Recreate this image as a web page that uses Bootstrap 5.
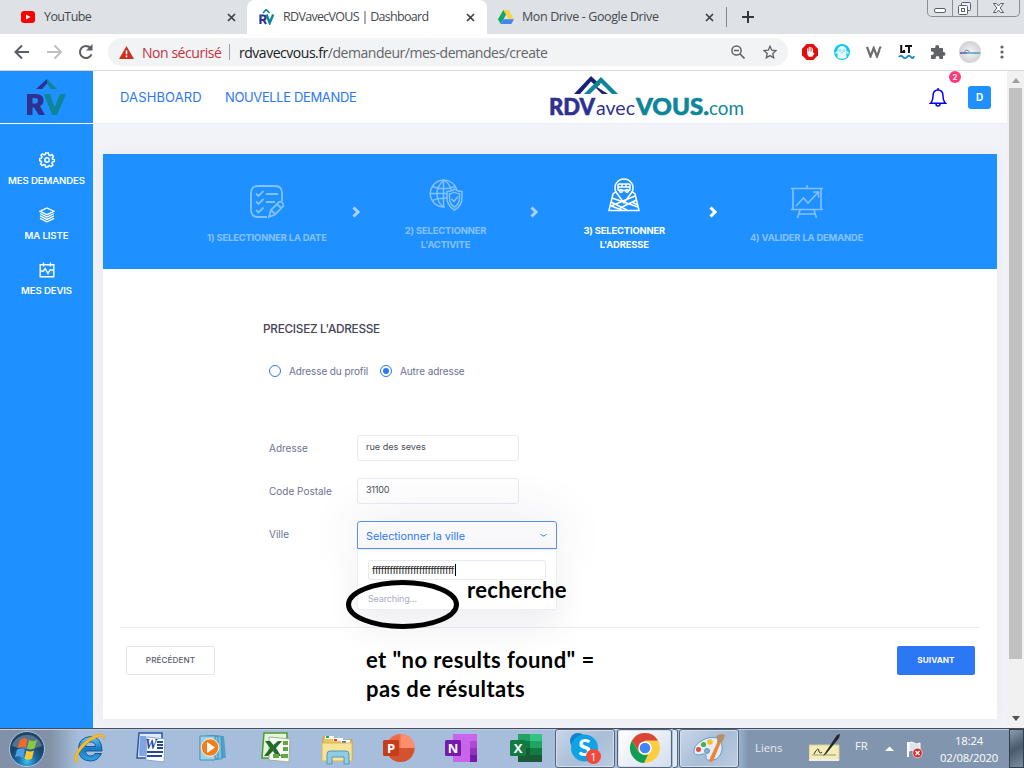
<!DOCTYPE html>
<html lang="fr">
<head>
<meta charset="utf-8">
<title>RDVavecVOUS | Dashboard</title>
<link href="https://cdn.jsdelivr.net/npm/bootstrap@5.3.0/dist/css/bootstrap.min.css" rel="stylesheet">
<style>
:root{--brand:#1e90ff;--accent:#2c77f4;--pop:Inter,"Open Sans",sans-serif;--segoe:"Open Sans","Noto Sans",sans-serif}
body{width:1024px;height:768px;overflow:hidden;font-family:var(--pop);background:#f2f3f8}
svg{display:block;flex:none}
.tabstrip{height:34px;background:#dee1e6;font:12.5px/34px var(--segoe);color:#45494d}
.tab-item{height:34px;position:relative}
.tab-item.current{background:#fff;border-radius:8px 8px 0 0}
.tab-title{letter-spacing:-.66px;white-space:nowrap}
.toolbar{height:37px;background:#fff;border-bottom:1px solid #d8d9dc;font-family:var(--segoe)}
.omnibox{width:680px;height:28px;border-radius:14px;background:#f1f3f4;font-size:14px;white-space:nowrap}
.winbtns{width:93px;height:17px;border:1px solid #8a8f96;border-top:0;border-radius:0 0 5px 5px}
.winbtns>div+div{border-left:1px solid #8a8f96}
.viewport{height:657px}
.side{width:93px;background:var(--brand);color:#fff}
.side-logo{height:53px;border-bottom:1px solid #fff}
.side-link{height:55px;font-size:9.6px;font-weight:600;line-height:14px;white-space:nowrap;letter-spacing:-.1px}
.topbar{height:53px;background:#fff;border-bottom:1px solid #ebedf2}
.topbar .top-link{color:var(--accent);text-decoration:none;font-size:13px;white-space:nowrap;padding-top:1px}
.bell{width:18px;position:relative}
.bell-count{position:absolute;left:20px;top:-16px;width:12px;height:12px;border-radius:6px;background:#fd397a;color:#fff;font-size:8px;line-height:12px;font-weight:600;text-align:center}
.avatar{width:23px;height:23px;border-radius:3px;background:var(--brand);color:#fff;font-size:10px;font-weight:700}
.panel{width:894px;height:565px;margin:30px 0 0 10px;background:#fff;box-shadow:0 0 13px rgba(82,63,105,.05)}
.steps{height:115px;background:var(--brand);display:grid;grid-template-columns:178.7px 178.7px 178.7px 186px;padding-left:75px;color:#fff}
.step{position:relative;font-size:9.4px;font-weight:700;line-height:14px;text-align:center;letter-spacing:-.15px}
.step>.inner{opacity:.45;position:relative;left:-.5px}
.step.on>.inner{opacity:1}
.step .chev{position:absolute;right:-4px;top:52px;opacity:.6}
.step.on .chev{opacity:1}
.form-area{height:358px;padding:52px 0 0 160px;color:#6c7293;font-size:10px}
.form-area h3{font-size:11.8px;line-height:16px;font-weight:500;color:#464457;margin:0;letter-spacing:-.28px}
.dot{width:12px;height:12px;border:1px solid var(--accent);border-radius:6px;display:flex;align-items:center;justify-content:center}
.dot.sel::after{content:"";width:6px;height:6px;border-radius:3px;background:var(--accent)}
.lbl{width:88px;line-height:26px}
.field{width:162px;height:26px;border:1px solid #e8eaf1;border-radius:3px;padding:0 8px;line-height:22px;font-size:9.1px;color:#495057}
.picker{width:200px;height:28px;position:relative;border:1px solid #5a8ff0;border-radius:3px 3px 0 0;padding:0 9px 0 8px;color:var(--accent);font-size:10.8px;background:linear-gradient(#fafafc,#f7f7fa);box-shadow:0 0 50px rgba(82,63,105,.15)}
.drop{position:absolute;left:-1px;top:27px;width:200px;height:61px;background:#fff;border:1px solid #ebedf2;border-radius:0 0 3px 3px;padding:10px 10px;box-shadow:0 18px 30px rgba(82,63,105,.09)}
.drop .q{width:178px;height:20px;border:1px solid #e8eaf1;border-radius:2px;font:10px/18px var(--pop);color:#222;padding-left:3px}
.caret{width:1px;height:12px;background:#000;margin-left:1px}
.drop .wait{font-size:9px;line-height:12px;color:#a7abc3;margin-top:13px;letter-spacing:-.15px}
.actions{margin:0 17px;border-top:1px solid #ebedf2;padding:18px 5px 0 6px}
.btn-step{height:29px;font-size:8.2px;font-weight:500;border-radius:2px;padding:0;letter-spacing:.05px}
.btn-prev{width:89px;border:1px solid #e6e8ef;color:#595d6e}
.btn-next{width:78px;background:var(--accent);color:#fff;font-weight:700}
.scroller{width:17px;background:#f1f1f1}
.thumb{width:13px;height:571px;background:#c1c1c1}
.note{position:absolute;font:700 22px/29px Lato,sans-serif;color:#000;white-space:nowrap}
.note-a{left:467px;top:575px;letter-spacing:.3px}
.note-b{left:366px;top:645px;letter-spacing:.42px}
.ring{position:absolute;left:345px;top:578px}
.taskbar{height:40px;border-top:1px solid #434d5b;background:linear-gradient(90deg,#8291a8 0,#8291a8 50px,#a6bedb 78px,#a6bedb 735px,#8295ae 748px,#8295ae);box-shadow:inset 0 1px #c0cfe1;color:#f4f6fa;font-family:var(--segoe);font-size:11.3px}
.app{width:62px;height:39px;display:flex;align-items:center;justify-content:center;padding-bottom:2px}
.app.open{width:60px;margin-right:2px;border:1px solid #54647b;border-radius:3px;box-shadow:inset 0 0 0 1px #d5dfeb;background:linear-gradient(135deg,#c8d5e7,#a9bdd7 55%,#bccde1);padding-bottom:2px}
.app.front{width:55px;background:linear-gradient(135deg,#fff,#d3dfef);margin-right:1px}
.stack-edge{width:5px;height:39px;margin-right:1px;border:1px solid #54647b;border-left:0;border-radius:0 3px 3px 0;background:#dfe8f3}
.peek{width:15px;height:39px;border:1px solid #333e4c;background:linear-gradient(150deg,#8b9bb0,#4a5a6e 50%,#7d8fa5)}
</style>
</head>
<body class="d-flex flex-column m-0 position-relative">
<svg width="0" height="0" class="position-absolute"><defs>
<g id="cross"><path d="M1 1l7 7M8 1L1 8" stroke="#3c4043" stroke-width="1.7"/></g>
<g id="arrow"><path d="M1.500 1.500L6 6L1.500 10.500" fill="none" stroke="#fff" stroke-width="3.100"/></g>
</defs></svg>

<nav class="tabstrip d-flex">
  <div class="tab-item d-flex align-items-center" style="width:247px">
    <svg style="margin-left:21px" width="14" height="12" viewBox="0 0 14 12"><rect width="14" height="12" rx="3" fill="#f00"/><path d="M5 3.400v5.200L9.500 6z" fill="#fff"/></svg>
    <span class="tab-title" style="margin-left:9px;letter-spacing:-.6px">YouTube</span>
    <svg class="ms-auto" style="margin-right:11px" width="9" height="9"><use href="#cross"/></svg>
  </div>
  <div class="tab-item current d-flex align-items-center" style="width:240px">
    <svg style="margin-left:12px" width="16" height="16" viewBox="0 0 16 16"><path d="M4 4l3.200-3.400L10.500 4" fill="none" stroke="#0e8699" stroke-width="1.600"/><path d="M1.500 15V6.500h3q2 0 2 2.200T4 11H2m2.500 0l2.500 4" fill="none" stroke="#2e3192" stroke-width="2.200"/><path d="M7.500 5.500l3.200 8.500l3.500-8.500" fill="none" stroke="#0e8699" stroke-width="2.400"/></svg>
    <span class="tab-title" style="margin-left:8px;letter-spacing:-.7px">RDVavecVOUS | Dashboard</span>
    <svg class="ms-auto" style="margin-right:12px" width="9" height="9"><use href="#cross"/></svg>
  </div>
  <div class="tab-item d-flex align-items-center" style="width:239px">
    <svg style="margin-left:11px" width="16" height="14" viewBox="0 0 16 14"><path d="M5.300 0h5.400L16 9.300h-5.400z" fill="#ffcf48"/><path d="M5.300 0L0 9.300L2.700 14L8 4.700z" fill="#11a861"/><path d="M5.400 9.300H16L13.300 14H2.700z" fill="#4285f4"/></svg>
    <span class="tab-title" style="margin-left:8px;letter-spacing:-.38px">Mon Drive - Google Drive</span>
    <svg class="ms-auto" style="margin-right:12px" width="9" height="9"><use href="#cross"/></svg>
  </div>
  <div style="width:1px;height:20px;margin-top:7px;background:#84888e"></div>
  <svg style="margin:11px 0 0 15px" width="12" height="12"><path d="M6 0v12M0 6h12" stroke="#33373b" stroke-width="2"/></svg>
  <div class="winbtns d-flex ms-auto" style="margin-right:4px">
    <div style="width:25px"><svg width="24" height="16"><rect x="6.500" y="8.500" width="11" height="4" rx="1.500" fill="#fff" stroke="#5b5f66"/></svg></div>
    <div style="width:25px"><svg width="24" height="16"><rect x="8.500" y="2.500" width="9" height="8" rx="1" fill="#eef" stroke="#5b5f66"/><rect x="5.500" y="5.500" width="9" height="9" rx="1" fill="#fff" stroke="#5b5f66"/><rect x="8.500" y="8.500" width="3" height="3" fill="none" stroke="#5b5f66"/></svg></div>
    <div style="width:42px"><svg width="41" height="16"><path d="M15.500 3.500h3l2 2.500l2-2.500h3l-3.300 4.500l3.300 4.500h-3l-2-2.500l-2 2.500h-3l3.300-4.500z" fill="#fff" stroke="#5b5f66"/></svg></div>
  </div>
</nav>

<div class="toolbar d-flex align-items-center">
  <svg style="margin-left:14px" width="16" height="16"><path d="M15 8H2M8 1.500L1.500 8L8 14.500" fill="none" stroke="#5a5e63" stroke-width="2"/></svg>
  <svg style="margin-left:17px" width="16" height="16"><path d="M0 8h13M7.500 1.500L14 8l-6.500 6.500" fill="none" stroke="#bcbec2" stroke-width="2"/></svg>
  <svg style="margin-left:15px" width="16" height="16"><path d="M13.500 10.300A6 6 0 1 1 12.400 4" fill="none" stroke="#5a5e63" stroke-width="2"/><path d="M14.500 0v6.500H8z" fill="#5a5e63"/></svg>
  <div class="omnibox d-flex align-items-center" style="margin-left:14px">
    <svg style="margin-left:11px" width="15" height="13" viewBox="0 0 15 13"><path d="M7.500 0L15 13H0z" fill="#c9301f"/><path d="M7.500 4.500v3.800M7.500 9.500v1.700" stroke="#fff" stroke-width="1.600"/></svg>
    <span style="margin-left:8px;width:80px;color:#c5313c;letter-spacing:-.45px">Non sécurisé</span>
    <i style="width:1px;height:16px;margin:0 9px 0 7px;background:#9a9da1"></i>
    <span style="color:#62666b;letter-spacing:-.47px"><span style="color:#202124">rdvavecvous.fr</span>/demandeur/mes-demandes/create</span>
    <svg class="ms-auto" width="14" height="14"><circle cx="5.500" cy="5.500" r="4.600" fill="none" stroke="#5f6368" stroke-width="1.500"/><path d="M3 5.500h5M9 9l4.500 4.500" stroke="#5f6368" stroke-width="1.600"/></svg>
    <svg style="margin:0 11px 0 18px" width="14" height="14" viewBox="0 0 14 14"><path d="M7 1.200l1.700 4l4.300.4l-3.200 2.900l.9 4.300L7 10.600l-3.700 2.200l.9-4.300L1 5.600l4.300-.4z" fill="none" stroke="#5f6368" stroke-width="1.300"/></svg>
  </div>
  <svg style="margin-left:14px" width="16" height="16" viewBox="0 0 16 16"><path d="M4.700 0h6.600L16 4.700v6.600L11.300 16H4.700L0 11.300V4.700z" fill="#e40d0d"/><path d="M5.700 8V4.800M7.300 7.500V3.200M8.900 7.500V3.200M10.500 8V4.800" stroke="#fff" stroke-width="1.100" stroke-linecap="round"/><path d="M5.100 7.500h5.900v1.800l.8-.8l.7.700l-2.200 3.500H6.800Q5.100 11.500 5.100 7.500" fill="#fff"/></svg>
  <svg style="margin-left:16px" width="16" height="16" viewBox="0 0 16 16"><circle cx="8" cy="8" r="8" fill="#13c8e8"/><path d="M3.500 13.500V6Q4.500 2 8 2t4.500 4v7.500Q8 16 3.500 13.500z" fill="#e6fcff"/><path d="M1.500 9.500l2-2M14.500 9.500l-2-2" stroke="#fff" stroke-width="1.300"/><circle cx="6" cy="6.500" r="1" fill="none" stroke="#13c8e8" stroke-width=".5"/><circle cx="10" cy="6.500" r="1" fill="none" stroke="#13c8e8" stroke-width=".5"/><path d="M6.800 8.500q1.200 1.200 2.400 0" fill="none" stroke="#13c8e8" stroke-width=".6"/></svg>
  <svg style="margin-left:16px" width="16" height="12" viewBox="0 0 16 12"><path d="M1 1l3.500 9.500L7.700 2L11 10.500L13.500 4" fill="none" stroke="#6e6e6e" stroke-width="2.200"/><path d="M13 4L14.700.5" stroke="#6e6e6e" stroke-width="2"/></svg>
  <svg style="margin-left:16px" width="17" height="14" viewBox="0 0 17 14"><path d="M3.200 0v7h4M7 1h7M11 1v7M6 7V5" fill="none" stroke="#111" stroke-width="2"/><path d="M1 12q2-2.500 4 0t4 0t4 0t3-1" fill="none" stroke="#1a8bd0" stroke-width="2"/></svg>
  <svg style="margin-left:15px" width="16" height="16" viewBox="0 0 16 16"><path d="M1 4h4.200V3a2 2 0 0 1 4 0v1H13v4h.6a1.900 1.900 0 0 1 0 3.800H13V15H9.400v-1a1.900 1.900 0 0 0-3.800 0v1H1v-4h1a1.800 1.800 0 0 0 0-3.600H1z" fill="#5f6368"/></svg>
  <svg style="margin-left:13px" width="22" height="22" viewBox="0 0 22 22"><defs><radialGradient id="pg"><stop offset="0" stop-color="#f6f6f8"/><stop offset="1" stop-color="#d0d0d6"/></radialGradient></defs><circle cx="11" cy="11" r="11" fill="url(#pg)"/><path d="M5.500 10.500l2-1.500l3 1.500" fill="none" stroke="#476fa8" stroke-width=".9"/><path d="M1 12h7" stroke="#4444a0" stroke-width="1.300"/><path d="M8 12h13" stroke="#3996a4" stroke-width="1.300"/></svg>
  <svg style="margin-left:19px" width="4" height="14" fill="#5f6368"><circle cx="2" cy="2" r="1.600"/><circle cx="2" cy="7" r="1.600"/><circle cx="2" cy="12" r="1.600"/></svg>
</div>

<div class="viewport d-flex">
  <aside class="side">
    <div class="side-logo"><svg width="93" height="52"><path d="M36 18L47 8v4.500L42 18z" fill="#2e3192"/><path d="M57 18L47 8v4.500L51 18z" fill="#0e8699"/><path fill-rule="evenodd" d="M27 44V23h9q7.500 0 7.500 6.500q0 4-3.500 5.500l5 9h-6.200L34 36.500h-1.500V44zM32.500 27v5.500h2.200q3.300 0 3.300-2.800T34.700 27z" fill="#2e3192"/><path d="M44 23h6l4.500 13.500L60 23h6l-9 21h-5z" fill="#0e8699"/></svg></div>
    <div style="height:28px"></div>
    <a class="side-link d-flex flex-column align-items-center text-white text-decoration-none"><svg width="16" height="16" viewBox="0 0 16 16" fill="none" stroke="#fff" stroke-width="1.500"><path d="M6.600 1h2.800l.4 2l1.400.6L13 2.600l1.400 2l-1.200 1.600l.3 1l1.900.4v1.800l-2 .6l-.5 1.300l1 1.700l-1.800 1.600l-1.800-1l-1.100.4L8.900 15H6.600l-.5-1.900l-1.300-.5l-1.700 1l-1.500-1.700l1-1.800L2 9.100L.7 8.700V6.600l1.700-.5l.6-1.300l-1-1.700L3.500 1.800l1.700 1l1-.4z"/><circle cx="8" cy="8" r="2.200"/></svg><span style="margin-top:6px">MES DEMANDES</span></a>
    <a class="side-link d-flex flex-column align-items-center text-white text-decoration-none"><svg width="16" height="16" viewBox="0 0 16 16" fill="none" stroke="#fff" stroke-width="1.300"><path d="M8 1l7 3.300l-7 3.400l-7-3.400z"/><path d="M1 6.500L8 10l7-3.500M1 8.900l7 3.500l7-3.500M1 11.300l7 3.500l7-3.500"/></svg><span style="margin-top:6px">MA LISTE</span></a>
    <a class="side-link d-flex flex-column align-items-center text-white text-decoration-none"><svg width="16" height="16" viewBox="0 0 16 16" fill="none" stroke="#fff" stroke-width="1.400"><path d="M1.200 2.700h13.600v12H1.200zM4.500.5v4M11.500.5v4M2 9h2.500l1.700-2.500L9 11.500L11 8h3.500"/></svg><span style="margin-top:6px">MES DEVIS</span></a>
  </aside>

  <main style="width:914px">
    <header class="topbar d-flex align-items-center">
      <a class="top-link" style="margin-left:27px;width:105px;letter-spacing:.13px">DASHBOARD</a>
      <a class="top-link" style="width:323px;letter-spacing:-.37px">NOUVELLE DEMANDE</a>
      <svg width="200" height="46" viewBox="0 0 200 46" font-family="Lato,sans-serif"><path d="M26 20L43 2L52 10.500L49 13L43 7.500L32 20z" fill="#1b1f73"/><path d="M49 13L60 20H54L46 12z" fill="#1b1f73"/><path d="M36 20L53 3L70 20H64L53 9L42 20z" fill="#0e8699"/><g stroke-width=".6"><text x="1" y="41" font-size="23" font-weight="900" fill="#2e3192" stroke="#2e3192" textLength="46" lengthAdjust="spacingAndGlyphs">RDV</text><text x="48" y="41" font-size="19" fill="#2e3192" textLength="39" lengthAdjust="spacingAndGlyphs">avec</text><text x="88" y="41" font-size="23" font-weight="900" fill="#0e8699" stroke="#0e8699" textLength="73" lengthAdjust="spacingAndGlyphs">VOUS.</text><text x="161" y="41" font-size="20" fill="#0e8699" textLength="35" lengthAdjust="spacingAndGlyphs">com</text></g></svg>
      <div class="bell" style="margin-left:181px"><svg width="18" height="20" viewBox="0 0 18 20" fill="none" stroke="#00f" stroke-width="1.500"><path d="M1.500 16.200Q4 14 4 8.500Q4.300 3 9 3t5 5.500Q14 14 16.500 16.200zM9 3V1M7 17q0 2 2 2t2-2"/></svg><span class="bell-count">2</span></div>
      <div class="avatar d-flex align-items-center justify-content-center" style="margin-left:21px">D</div>
    </header>

    <section class="panel">
      <div class="steps">
        <div class="step"><div class="inner d-flex flex-column align-items-center" style="padding-top:31px"><svg width="34" height="34" viewBox="0 0 34 34" fill="none" stroke="#fff" stroke-width="1.800"><path d="M17 32H8q-7 0-7-7V8q0-7 7-7h17q7 0 7 7v8M6 8.500l2.500 2.500l5-5M6 16.500l2.500 2.500l5-5M6 25l2.500 2.500l5-5M16 9h12M16 17h9M19 32l2-7l8-8q2-1 3.500 1t.5 3.500l-8 8zM21 25l4 4M27 19l4 4"/></svg><span style="margin-top:12px">1) SELECTIONNER LA DATE</span></div><svg class="chev" width="9" height="12"><use href="#arrow"/></svg></div>
        <div class="step"><div class="inner d-flex flex-column align-items-center" style="padding-top:25px"><svg width="34" height="32" viewBox="0 0 34 32" fill="none" stroke="#fff" stroke-width="1.500"><path d="M16 28A13.500 13.500 0 1 1 28 12"/><path d="M14.500 1v27M15 1Q7 8 8 16t6 12M15 1q6 4 7 10M1 14.500h17M3.500 7.500Q14 12 26 7.500M3.500 21.500Q9 19 18 19"/><path d="M25.500 10q3 2.500 7.500 2.500v6Q33 27 25.500 31Q18 27 18 18.500v-6q5 0 7.500-2.500z"/><path d="M25.500 13q2 1.600 5 1.800V19q0 6-5 9q-5-3-5-9v-4.200q3-.2 5-1.800M22.500 20l2.500 2.500l4-5"/></svg><span style="margin-top:13px">2) SELECTIONNER<br>L'ACTIVITE</span></div><svg class="chev" width="9" height="12"><use href="#arrow"/></svg></div>
        <div class="step on"><div class="inner d-flex flex-column align-items-center" style="padding-top:24px"><svg width="32" height="34" viewBox="0 0 32 34" fill="none" stroke="#fff" stroke-width="1.500"><path d="M8 14A9 9 0 1 1 24 14L16 25zM8.500 13L5 16L1 32.500h30L27 16l-3.500-3"/><rect x="10" y="6" width="12" height="6.500" rx="1"/><path d="M10 9h12M14 6v3M18 6v3"/><circle cx="13" cy="13" r="1.400"/><circle cx="19" cy="13" r="1.400"/><path d="M4 20l26 9M3 24l16 8M27 18L3 28M28.500 22L12 30M3 28l11 4M24 24l6 3"/></svg><span style="margin-top:12px">3) SELECTIONNER<br>L'ADRESSE</span></div><svg class="chev" width="9" height="12"><use href="#arrow"/></svg></div>
        <div class="step"><div class="inner d-flex flex-column align-items-center" style="padding-top:31px"><svg width="34" height="34" viewBox="0 0 34 34" fill="none" stroke="#fff" stroke-width="1.600"><path d="M1 3.500h32M3 3.500v21h28v-21M17 3V0M1 24.500h32M10 25L7.500 33M24 25l2.500 8M9 29h16M6 21l7.500-8l4.500 5L28 7.500M23 7h5.500v5.500"/></svg><span style="margin-top:12px">4) VALIDER LA DEMANDE</span></div></div>
      </div>

      <div class="form-area">
        <h3>PRECISEZ L'ADRESSE</h3>
        <div class="d-flex align-items-center" style="margin:28px 0 0 6px;height:12px">
          <span class="dot"></span><span style="margin-left:8px;width:91px;letter-spacing:-.1px">Adresse du profil</span>
          <span class="dot sel"></span><span style="margin-left:8px;letter-spacing:-.1px">Autre adresse</span>
        </div>
        <div class="d-flex" style="margin:58px 0 0 6px"><div class="lbl">Adresse</div><div class="field">rue des seves</div></div>
        <div class="d-flex" style="margin:17px 0 0 6px"><div class="lbl">Code Postale</div><div class="field" style="letter-spacing:-.25px">31100</div></div>
        <div class="d-flex" style="margin:17px 0 0 6px"><div class="lbl">Ville</div>
          <div class="picker d-flex align-items-center justify-content-between"><span class="pt-1">Selectionner la ville</span><svg width="7" height="5"><path d="M.5 1q3 4 6 0" fill="none" stroke="#2c77f4"/></svg>
            <div class="drop"><div class="q d-flex align-items-center"><span style="letter-spacing:-.39px">ffffffffffffffffffffffffffff</span><i class="caret"></i></div><div class="wait">Searching...</div></div>
          </div>
        </div>
      </div>
      <div class="actions d-flex justify-content-between">
        <button class="btn btn-step btn-prev">PRÉCÉDENT</button>
        <button class="btn btn-step btn-next">SUIVANT</button>
      </div>
    </section>
  </main>

  <div class="scroller d-flex flex-column align-items-center">
    <svg style="margin:7px 0 5px" width="8" height="5"><path d="M0 5l4-5l4 5z" fill="#a0a0a0"/></svg>
    <div class="thumb"></div>
    <svg class="mt-auto" style="margin-bottom:7px" width="8" height="5"><path d="M0 0h8L4 5z" fill="#505050"/></svg>
  </div>
</div>

<footer class="taskbar d-flex align-items-center">
  <div class="app" style="width:54px;padding:0"><svg width="38" height="38" viewBox="0 0 38 38"><defs><radialGradient id="orb" cy=".85"><stop offset="0" stop-color="#35c6f2"/><stop offset=".5" stop-color="#1c6aa5"/><stop offset="1" stop-color="#1d4467"/></radialGradient></defs><circle cx="19" cy="19" r="17.500" fill="url(#orb)" stroke="#a6cbe0"/><path d="M4 16a15.500 15 0 0 1 30 0Q19 22 4 16" fill="#fff" opacity=".25"/><path d="M12 10q4-3 7.500-.5L17.500 18q-4-2-8 0z" fill="#f0682e"/><path d="M21 10q4 2 8 0l-2.500 8.500q-4 2-7.500 0z" fill="#8cc63e"/><path d="M9 19.500q4-2 8 0L15 28q-4-3-8-.5z" fill="#4aa0e4"/><path d="M18.500 20.500q4 2 7.500 0L24 28.500q-4 2.500-7.500 0z" fill="#fdc62f"/></svg></div>
  <div class="app" style="width:70px"><svg width="34" height="34" viewBox="0 0 34 34"><defs><linearGradient id="ieg" x2="0" y2="1"><stop offset="0" stop-color="#66c9f2"/><stop offset=".5" stop-color="#1878c4"/><stop offset="1" stop-color="#2aa5e6"/></linearGradient></defs><path fill-rule="evenodd" d="M30 20H13.500q.5 5 5 5q3.300 0 4.500-2.500h6.500Q26 30 18.500 30Q6.500 29.500 6.500 18T18.500 5.500Q30 6 30 20M13.500 15.500h10q-.5-4.500-5-4.500t-5 4.500" fill="url(#ieg)" stroke="#14508a" stroke-width=".9"/><path d="M3.500 31Q-1 26 10 13Q24 0 32 4q2 1-.5 5q1-4-3-3.500Q19 7 9 19Q2 29 6.500 29.500Q4 33 3.500 31" fill="#f6bd2d" stroke="#cf9220" stroke-width=".4"/></svg></div>
  <div class="app" style="width:54px"><svg width="32" height="32" viewBox="0 0 32 32"><path d="M4 1h23v25H2z" fill="#dfe9f8" stroke="#2d56a5" stroke-width="1.500"/><path d="M5 4h6v20H4z" fill="#7fa5e0"/><path d="M12 5l18 2l-1 23l-18-2z" fill="#fff" stroke="#8ea7cf"/><path d="M22 10h6M22 13h6M22 16h6M12 20h16M12 24h15" stroke="#24489b" stroke-width="1.800"/><text x="10" y="17" font-family="Liberation Serif,serif" font-style="italic" font-weight="700" font-size="14" fill="#24489b" textLength="12" lengthAdjust="spacingAndGlyphs">W</text></svg></div>
  <div class="app" style="width:70px"><svg width="30" height="28" viewBox="0 0 30 28"><path d="M14 2h12l2 22H14z" fill="#519fc9"/><path d="M11 2h12l1 23H10zM8 2h12v23H7z" fill="#77c1e2" stroke="#3682ad" stroke-width=".7"/><path d="M2 2h15v24H2z" fill="#9bd3ec" stroke="#4791ba"/><circle cx="12" cy="13.500" r="8.800" fill="#f57c1c" stroke="#fff3d9"/><path d="M9 8v11l8-5.500z" fill="#fff"/></svg></div>
  <div class="app" style="width:55px"><svg width="32" height="32" viewBox="0 0 32 32"><path d="M4 1h23v25H2z" fill="#e6f4dc" stroke="#4c9d2f" stroke-width="1.500"/><path d="M9 5l21 2l-1 23l-20-2z" fill="#f7fbf3" stroke="#9cb690"/><path d="M5 9h5l3.500 4L18 9h4l-6 7l5 8h-5l-3-5l-5 5H4l6-8z" fill="#226b2a"/><path d="M23 9h5v4h-5zM23 15h5v4h-5zM21 22h7v4h-7zM13 22h6v4h-6z" fill="#65a448"/></svg></div>
  <div class="app" style="width:68px;padding:0"><svg width="34" height="34" viewBox="0 0 34 34"><path d="M3 5h11l2 3h16v19H3z" fill="#e8c55d" stroke="#c39e3d"/><path d="M5 4h9v3H5z" fill="#fff"/><path d="M6 4h3v2H6z" fill="#27a744"/><path d="M13 6h10v3H13z" fill="#fff"/><path d="M14 7h3v2h-3z" fill="#dd4433"/><path d="M21 8h9v3h-9z" fill="#fff"/><path d="M22 9h4v2h-4z" fill="#3478cc"/><path d="M2 11h30v18H2z" fill="#f8e39b" stroke="#d8b75b"/><path d="M7 32V22q0-3 3-3h16q3 0 3 3v10h-5v-7H12v7z" fill="#8fcbe5" stroke="#5798b8"/></svg></div>
  <div class="app" style="width:54px"><svg width="33" height="28" viewBox="0 0 33 28"><circle cx="18.500" cy="14" r="14" fill="#ed6c47"/><path d="M18.500 0a14 14 0 0 1 14 14h-14z" fill="#ff8f6b"/><path d="M4.500 14h28a14 14 0 0 1-28 0z" fill="#d35230"/><rect x="1" y="6" width="16" height="16" rx="1.500" fill="#c43e1c"/><text x="9" y="18.500" text-anchor="middle" font-family="Open Sans,sans-serif" font-size="13" font-weight="700" fill="#fff">P</text></svg></div>
  <div class="app" style="width:70px"><svg width="33" height="28" viewBox="0 0 33 28"><path d="M9 0h24v28H9z" fill="#ca64ea"/><path d="M26 7h7v7h-7z" fill="#ae4bd5"/><path d="M26 14h7v7h-7z" fill="#9332bf"/><path d="M26 21h7v7h-7z" fill="#7719aa"/><rect x="1" y="6" width="16" height="16" rx="1.500" fill="#7719aa"/><text x="9" y="18.500" text-anchor="middle" font-family="Open Sans,sans-serif" font-size="13" font-weight="700" fill="#fff">N</text></svg></div>
  <div class="app" style="width:60px"><svg width="33" height="28" viewBox="0 0 33 28"><path d="M9 0h12v7H9z" fill="#21a366"/><path d="M21 0h12v7H21z" fill="#33c481"/><path d="M9 7h12v7H9z" fill="#107c41"/><path d="M21 7h12v7H21z" fill="#21a366"/><path d="M9 14h24v14H9z" fill="#185c37"/><path d="M21 14h12v7H21z" fill="#107c41"/><rect x="1" y="6" width="16" height="16" rx="1.500" fill="#107c41"/><text x="9" y="18.500" text-anchor="middle" font-family="Open Sans,sans-serif" font-size="13" font-weight="700" fill="#fff">X</text></svg></div>
  <div class="app open"><svg width="34" height="34" viewBox="0 0 34 34"><circle cx="10" cy="10" r="8" fill="#0d83d0"/><circle cx="23" cy="24" r="7" fill="#0d83d0"/><circle cx="16.500" cy="17" r="13.500" fill="#10a3e3"/><text x="16.500" y="25" text-anchor="middle" font-family="Lato,sans-serif" font-size="23" font-weight="900" fill="#fff">S</text><circle cx="25.500" cy="25.500" r="7.500" fill="#f4473b"/><text x="25.500" y="29.500" text-anchor="middle" font-family="Open Sans,sans-serif" font-size="11" fill="#fff">1</text></svg></div>
  <div class="app open front"><svg width="30" height="30" viewBox="0 0 30 30"><circle cx="15" cy="15" r="15" fill="#ffcd40"/><path d="M2 7.500A15 15 0 0 1 28 7.500H15L9 19z" fill="#db4437"/><path d="M2 7.500L8.700 19Q12 23 18 21.500L14 30A15 15 0 0 1 2 7.500" fill="#0f9d58"/><circle cx="15" cy="15" r="6.800" fill="#fff"/><circle cx="15" cy="15" r="5.300" fill="#4285f4"/></svg></div>
  <div class="stack-edge"></div>
  <div class="app open"><svg width="34" height="34" viewBox="0 0 34 34"><path d="M2 22Q1 15 9 10t16-3q6 4 5 12q-2 9-9 10t-7-2q1-5-3-4t-5 1q-3 0-4-2" fill="#e2edf7" stroke="#6a9cc4"/><circle cx="6.500" cy="18.500" r="2.500" fill="#e04e3e"/><circle cx="11.500" cy="13.500" r="2.600" fill="#55ad44"/><circle cx="18" cy="11" r="2.800" fill="#f7bf22"/><circle cx="15" cy="20" r="2.400" fill="#8ab7dc" stroke="#5a8bb8"/><path d="M18 31q-1-1 0-4l8-17l3 1l-7 17q-2 4-4 3" fill="#ee8434"/><path d="M25 11q1-4-1-6l5-2l4 1q-1 5-4 8z" fill="#b98e64"/></svg></div>
  <span style="margin-left:14px;width:54px;color:#e4e9f0">Liens</span>
  <svg style="margin-top:-2px" width="32" height="32" viewBox="0 0 32 32"><path d="M0 13h30v15H0z" fill="#f5edb8" stroke="#d4cc98"/><path d="M0 28h30" stroke="#eee" stroke-width="2"/><path d="M3 23h24" stroke="#9c9776"/><path d="M5 22q5-9 5-2q2 2 3 0" fill="none" stroke="#333"/><path d="M14 24L28 3l3-1l-1 4L17 22z" fill="#24282c"/></svg>
  <span style="margin-left:14px;width:30px;margin-top:-5px">FR</span>
  <svg width="9" height="5"><path d="M0 5l4.500-4.500L9 5z" fill="#fff"/></svg>
  <svg style="margin:3px 0 0 12px" width="17" height="18" viewBox="0 0 17 18"><path d="M2 1v15" stroke="#fff" stroke-width="2"/><path d="M3 2q3-2 5 0t6 0v8q-3 2-5.500 0T3 10z" fill="#dfe3e9" stroke="#fff"/><circle cx="11.500" cy="12" r="4.800" fill="#d92b2b" stroke="#fff" stroke-width=".6"/><path d="M9.500 10l4 4m0-4l-4 4" stroke="#fff" stroke-width="1.500"/></svg>
  <div class="text-center text-white ms-auto" style="line-height:17px;margin-right:11px;letter-spacing:-.2px">18:24<br>02/08/2020</div>
  <div class="peek"></div>
</footer>

<svg class="ring" width="116" height="54"><ellipse cx="57.500" cy="26.500" rx="54" ry="22" fill="none" stroke="#000" stroke-width="5"/></svg>
<div class="note note-a">recherche</div>
<div class="note note-b">et "no results found" =<br>pas de résultats</div>
<script src="https://cdn.jsdelivr.net/npm/bootstrap@5.3.0/dist/js/bootstrap.bundle.min.js"></script>
</body>
</html>
